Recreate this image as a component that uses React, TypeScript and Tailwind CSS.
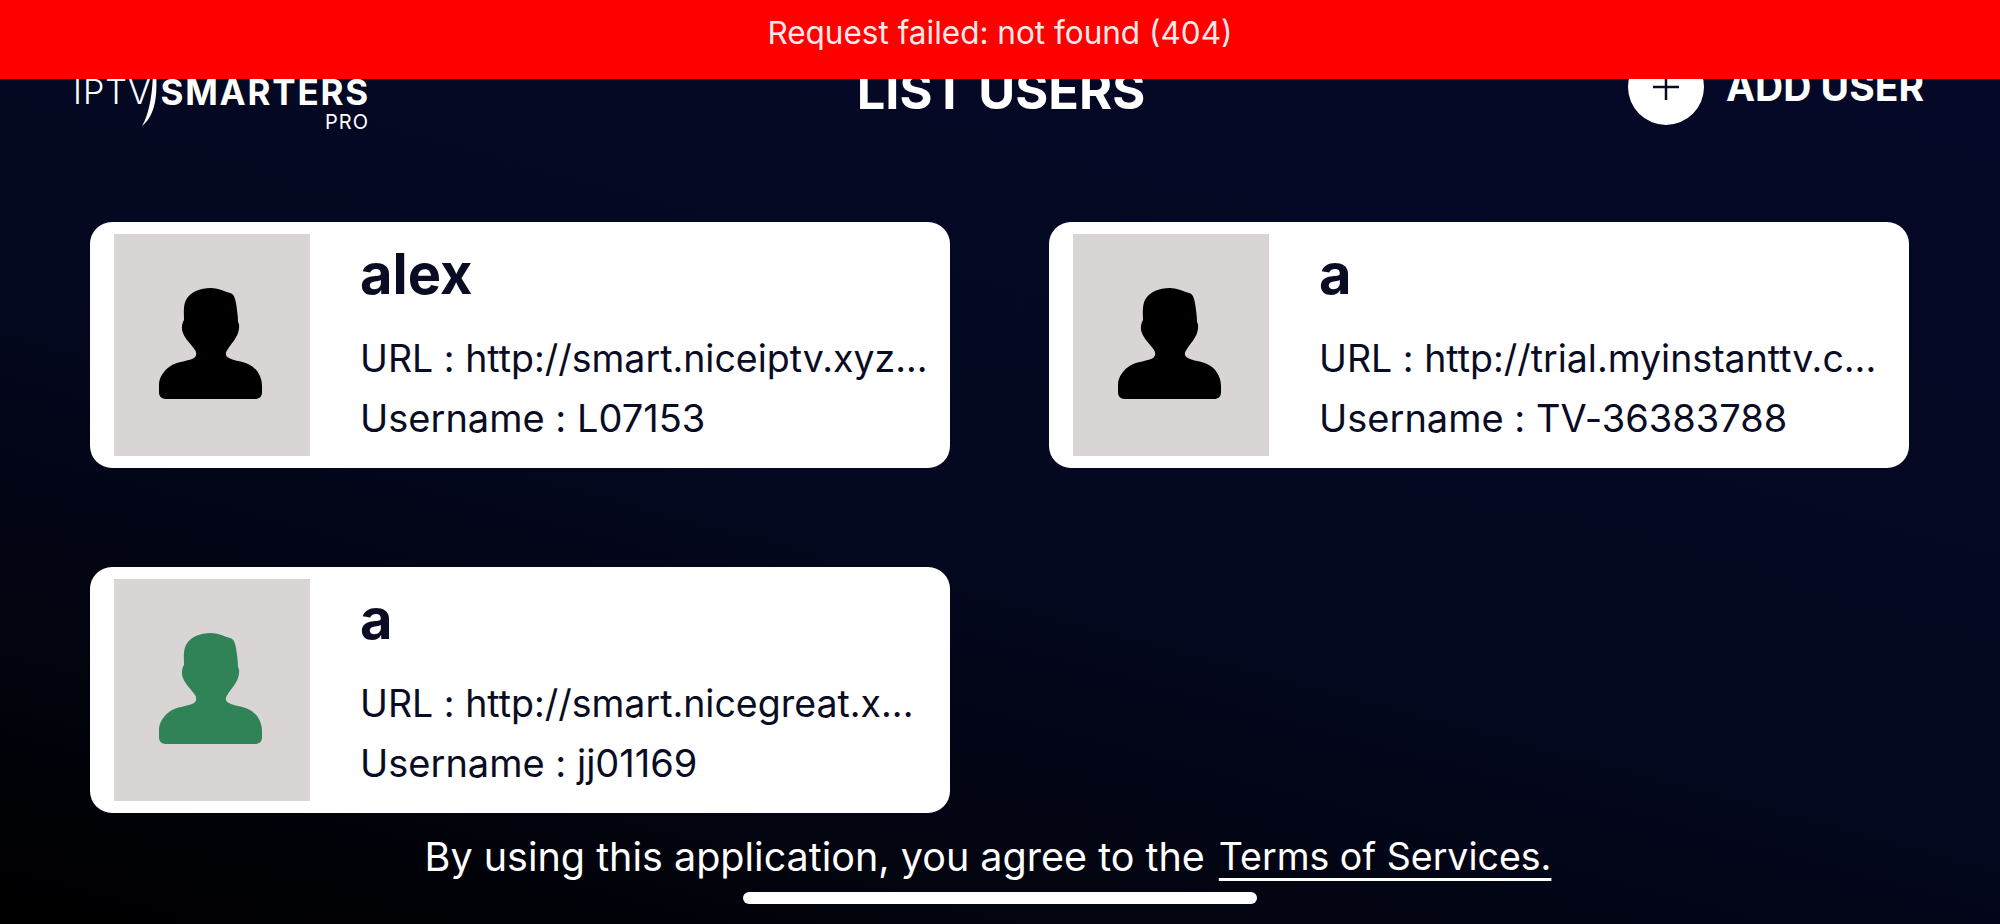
import React from 'react';

const USERS = [
  { name: 'alex', url: 'http://smart.niceiptv.xyz...', username: 'L07153', active: false },
  { name: 'a', url: 'http://trial.myinstanttv.c...', username: 'TV-36383788', active: false },
  { name: 'a', url: 'http://smart.nicegreat.x...', username: 'jj01169', active: true },
];

const PersonIcon = ({ className }: { className: string }) => (
  <svg viewBox="0 0 196 222" className={className}>
    <path
      fill="currentColor"
      d="M97 54 C103 54 110 57 116 59 C120 60 121 64 122 69 C123 76 124 82 124 88 C126 91 125 96 124 99 C122 105 117 110 114 115 C111 119 111 122 115 124 C120 127 128 127 134 130 C143 134 148 143 148 152 L148 158 C148 163 145 165 141 165 L52 165 C47 165 45 162 45 158 L45 151 C45 143 50 136 58 131 C64 128 73 127 78 125 C83 123 83 119 81 116 C77 110 71 105 69 99 C67 95 68 89 70 86 C70 80 69 72 72 66 C76 58 86 54 97 54 Z"
    />
  </svg>
);

const UserCard = ({ name, url, username, active }: (typeof USERS)[number]) => (
  <div className="flex h-[246px] items-center rounded-[22px] bg-white pl-[24px] pr-[10px] text-[#0a0c24]">
    <div className="h-[222px] w-[196px] shrink-0 bg-[#d9d5d4]">
      <PersonIcon className={active ? 'h-full w-full text-[#2f8357]' : 'h-full w-full text-black'} />
    </div>
    <div className="min-w-0 flex-1 pl-[50px] [font-feature-settings:'calt'_0]">
      <div className="text-[56px] font-bold leading-[62px]">{name}</div>
      <div className="mt-[24px] truncate text-[37.5px] leading-[59px]">URL : {url}</div>
      <div className="truncate text-[38px] leading-[60px]">Username : {username}</div>
    </div>
  </div>
);

export default function App() {
  return (
    <div
      className="relative h-[924px] overflow-hidden bg-[linear-gradient(195deg,#050928_0%,#040820_55%,#000000_100%)] text-white"
      style={{ fontFamily: 'Inter, sans-serif' }}
    >
      {/* Error toast, lies over the header */}
      <div className="absolute inset-x-0 top-0 z-10 flex h-[79px] items-start justify-center bg-[#ff0000] pt-[14px] text-[31.5px] leading-[38px] text-[#ffe9e9]">
        Request failed: not found (404)
      </div>

      {/* Header */}
      <div className="grid grid-cols-3 items-center pl-[73px] pr-[76px] pt-[49px]">
        <div className="flex h-[76px] items-start pt-[26px]">
          <div className="relative w-[297px]">
            <div className="flex items-center whitespace-nowrap leading-[34px]">
              <span className="w-[92px] text-[34px] font-light tracking-[1px]">IPTV</span>
              <span className="text-[35px] font-bold tracking-[1.8px]">SMARTERS</span>
            </div>
            <div className="mt-[4px] pr-[1px] text-right text-[20px] leading-[18px] tracking-[1px]">PRO</div>
            <svg viewBox="0 0 20 58" className="absolute left-[67px] top-[-6px] h-[58px] w-[20px]">
              <path d="M16 0 C17 20 18 44 2 57 C10 44 13 20 13 0 Z" fill="white" />
            </svg>
          </div>
        </div>
        <div className="pl-[5px] pt-[7px] text-center text-[50.5px] font-bold leading-[52px]">LIST USERS</div>
        <div className="flex items-center justify-end gap-[22px]">
          <div className="flex h-[76px] w-[76px] items-center justify-center rounded-full bg-white">
            <svg viewBox="0 0 28 28" className="h-[28px] w-[28px]">
              <path d="M14 1 V27 M1 14 H27" stroke="#0a0c24" strokeWidth="2.5" />
            </svg>
          </div>
          <div className="text-[39px] font-bold leading-[44px]">ADD USER</div>
        </div>
      </div>

      {/* User list */}
      <div className="mt-[97px] grid grid-cols-2 gap-x-[99px] gap-y-[99px] pl-[90px] pr-[91px]">
        {USERS.map((user, i) => (
          <UserCard key={i} {...user} />
        ))}
      </div>

      {/* Footer */}
      <div className="mt-[19px] flex items-center justify-center gap-[14px] pr-[24px] leading-[50px]">
        <span className="text-[39.5px]">By using this application, you agree to the</span>
        <span className="text-[37.5px] underline decoration-[3px] underline-offset-[8px]">Terms of Services.</span>
      </div>
      <div className="mx-auto mt-[10px] h-[12px] w-[514px] rounded-full bg-white" />
    </div>
  );
}
